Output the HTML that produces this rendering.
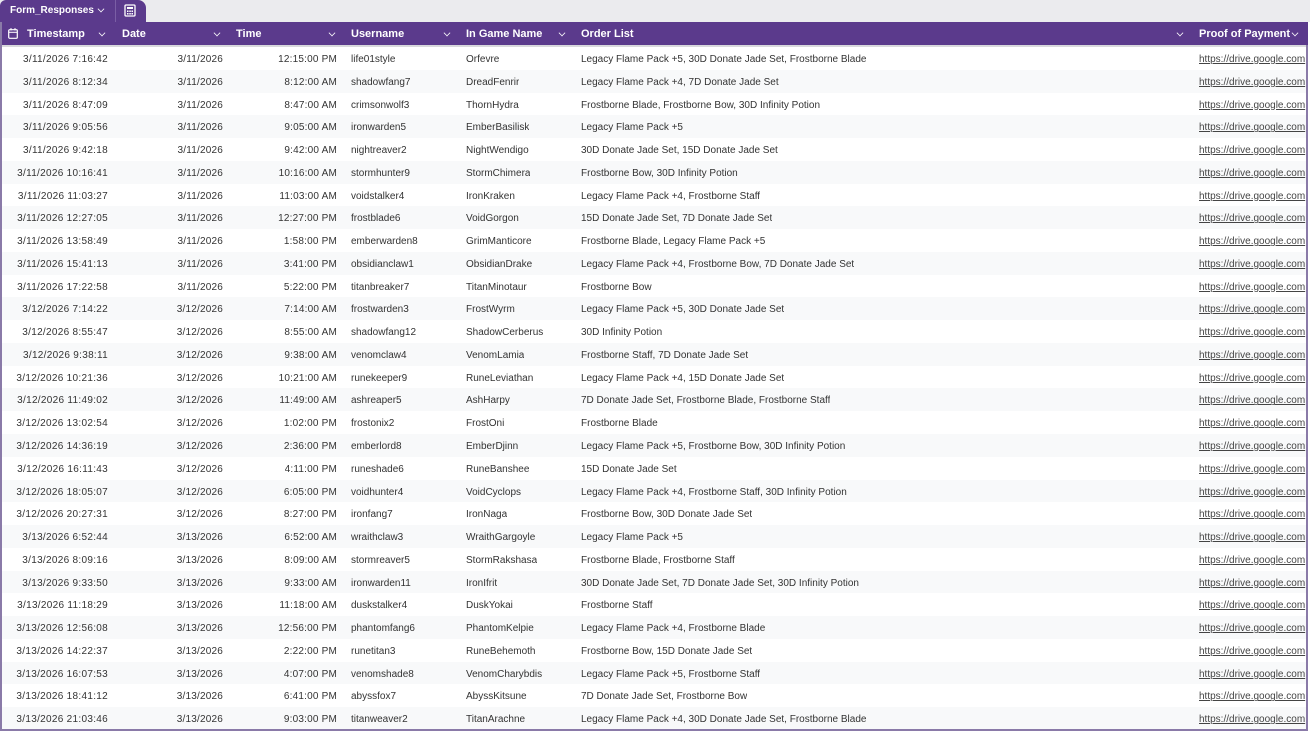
<!DOCTYPE html>
<html><head><meta charset="utf-8"><style>
*{margin:0;padding:0;box-sizing:border-box}
body{width:1310px;height:733px;overflow:hidden;background:#fff;font-family:"Liberation Sans",Arial,sans-serif;position:relative}
.top{position:absolute;left:0;top:0;width:1310px;height:22px;background:#ebebee}
.tab{position:absolute;left:0;top:0;height:22px;width:146px;background:#5b3a8c;border-radius:6px 8px 0 0;color:#fff;font-size:10px;font-weight:bold}
.tab .sep{position:absolute;left:115px;top:0;width:1px;height:22px;background:#7a5ea5}
.hdr{position:absolute;left:0;top:22px;width:1308px;height:23px;background:#5b3a8c;color:#fff;font-size:11px;font-weight:bold}
.hdr span{position:absolute;top:6px}
.chev{position:absolute;top:8px;width:6px;height:6px;border-right:1.5px solid #fff;border-bottom:1.5px solid #fff;transform:rotate(45deg) scale(.8)}
.shadow{position:absolute;left:0;top:45px;width:1308px;height:2px;background:#d8d8dc}
.rows{position:absolute;left:0;top:47px;width:1308px}
.r{height:22.77px;position:relative;font-size:10px;color:#333;line-height:22.77px}
.r:nth-child(even){background:#f8f9fa}
.r div{position:absolute;top:2px;white-space:nowrap;overflow:hidden}
.c1{right:1200px;text-align:right;letter-spacing:0.3px}
.c2{right:1085px;letter-spacing:0.2px}
.c3{right:971px;letter-spacing:0.2px}
.c4{left:351px}
.c5{left:466px}
.c6{left:581px}
.c7{left:1199px;width:108px;text-decoration:underline;color:#444}
.lb{position:absolute;left:0;top:22px;width:2px;height:709px;background:#8a7aa8}
.rb{position:absolute;left:1306px;top:45px;width:2px;height:686px;background:#8a7aa8}
.bb{position:absolute;left:0;top:729px;width:1308px;height:2px;background:#8a7aa8}
</style></head><body>
<div class="top"></div>
<div class="tab"><span style="position:absolute;left:10px;top:5px">Form_Responses</span><div class="chev" style="left:98px;top:6px"></div><div class="sep"></div>
<svg style="position:absolute;left:124px;top:4px" width="12" height="13" viewBox="0 0 12 13"><rect x="1" y="1" width="10" height="11" rx="1" fill="none" stroke="#fff" stroke-width="1.3"/><rect x="3" y="3" width="6" height="2" fill="#fff"/><g fill="#fff"><rect x="3" y="6.5" width="1.5" height="1.5"/><rect x="5.3" y="6.5" width="1.5" height="1.5"/><rect x="7.5" y="6.5" width="1.5" height="1.5"/><rect x="3" y="9" width="1.5" height="1.5"/><rect x="5.3" y="9" width="1.5" height="1.5"/><rect x="7.5" y="9" width="1.5" height="1.5"/></g></svg></div>
<div class="hdr">
<svg style="position:absolute;left:8px;top:6px" width="10" height="11" viewBox="0 0 10 11"><rect x="0.7" y="1.7" width="8.6" height="8.6" rx="1" fill="none" stroke="#fff" stroke-width="1.2"/><line x1="1" y1="4.3" x2="9" y2="4.3" stroke="#fff"/><line x1="3" y1="0" x2="3" y2="2.5" stroke="#fff"/><line x1="7" y1="0" x2="7" y2="2.5" stroke="#fff"/></svg>
<span style="left:27px">Timestamp</span><div class="chev" style="left:99px"></div>
<span style="left:122px">Date</span><div class="chev" style="left:214px"></div>
<span style="left:236px">Time</span><div class="chev" style="left:329px"></div>
<span style="left:351px">Username</span><div class="chev" style="left:444px"></div>
<span style="left:466px">In Game Name</span><div class="chev" style="left:559px"></div>
<span style="left:581px">Order List</span><div class="chev" style="left:1177px"></div>
<span style="left:1199px">Proof of Payment</span><div class="chev" style="left:1292px"></div>
</div>
<div class="shadow"></div>
<div class="rows" id="rows">
<div class="r"><div class="c1">3/11/2026 7:16:42</div><div class="c2">3/11/2026</div><div class="c3">12:15:00 PM</div><div class="c4">life01style</div><div class="c5">Orfevre</div><div class="c6">Legacy Flame Pack +5, 30D Donate Jade Set, Frostborne Blade</div><div class="c7">https://drive.google.com</div></div>
<div class="r"><div class="c1">3/11/2026 8:12:34</div><div class="c2">3/11/2026</div><div class="c3">8:12:00 AM</div><div class="c4">shadowfang7</div><div class="c5">DreadFenrir</div><div class="c6">Legacy Flame Pack +4, 7D Donate Jade Set</div><div class="c7">https://drive.google.com</div></div>
<div class="r"><div class="c1">3/11/2026 8:47:09</div><div class="c2">3/11/2026</div><div class="c3">8:47:00 AM</div><div class="c4">crimsonwolf3</div><div class="c5">ThornHydra</div><div class="c6">Frostborne Blade, Frostborne Bow, 30D Infinity Potion</div><div class="c7">https://drive.google.com</div></div>
<div class="r"><div class="c1">3/11/2026 9:05:56</div><div class="c2">3/11/2026</div><div class="c3">9:05:00 AM</div><div class="c4">ironwarden5</div><div class="c5">EmberBasilisk</div><div class="c6">Legacy Flame Pack +5</div><div class="c7">https://drive.google.com</div></div>
<div class="r"><div class="c1">3/11/2026 9:42:18</div><div class="c2">3/11/2026</div><div class="c3">9:42:00 AM</div><div class="c4">nightreaver2</div><div class="c5">NightWendigo</div><div class="c6">30D Donate Jade Set, 15D Donate Jade Set</div><div class="c7">https://drive.google.com</div></div>
<div class="r"><div class="c1">3/11/2026 10:16:41</div><div class="c2">3/11/2026</div><div class="c3">10:16:00 AM</div><div class="c4">stormhunter9</div><div class="c5">StormChimera</div><div class="c6">Frostborne Bow, 30D Infinity Potion</div><div class="c7">https://drive.google.com</div></div>
<div class="r"><div class="c1">3/11/2026 11:03:27</div><div class="c2">3/11/2026</div><div class="c3">11:03:00 AM</div><div class="c4">voidstalker4</div><div class="c5">IronKraken</div><div class="c6">Legacy Flame Pack +4, Frostborne Staff</div><div class="c7">https://drive.google.com</div></div>
<div class="r"><div class="c1">3/11/2026 12:27:05</div><div class="c2">3/11/2026</div><div class="c3">12:27:00 PM</div><div class="c4">frostblade6</div><div class="c5">VoidGorgon</div><div class="c6">15D Donate Jade Set, 7D Donate Jade Set</div><div class="c7">https://drive.google.com</div></div>
<div class="r"><div class="c1">3/11/2026 13:58:49</div><div class="c2">3/11/2026</div><div class="c3">1:58:00 PM</div><div class="c4">emberwarden8</div><div class="c5">GrimManticore</div><div class="c6">Frostborne Blade, Legacy Flame Pack +5</div><div class="c7">https://drive.google.com</div></div>
<div class="r"><div class="c1">3/11/2026 15:41:13</div><div class="c2">3/11/2026</div><div class="c3">3:41:00 PM</div><div class="c4">obsidianclaw1</div><div class="c5">ObsidianDrake</div><div class="c6">Legacy Flame Pack +4, Frostborne Bow, 7D Donate Jade Set</div><div class="c7">https://drive.google.com</div></div>
<div class="r"><div class="c1">3/11/2026 17:22:58</div><div class="c2">3/11/2026</div><div class="c3">5:22:00 PM</div><div class="c4">titanbreaker7</div><div class="c5">TitanMinotaur</div><div class="c6">Frostborne Bow</div><div class="c7">https://drive.google.com</div></div>
<div class="r"><div class="c1">3/12/2026 7:14:22</div><div class="c2">3/12/2026</div><div class="c3">7:14:00 AM</div><div class="c4">frostwarden3</div><div class="c5">FrostWyrm</div><div class="c6">Legacy Flame Pack +5, 30D Donate Jade Set</div><div class="c7">https://drive.google.com</div></div>
<div class="r"><div class="c1">3/12/2026 8:55:47</div><div class="c2">3/12/2026</div><div class="c3">8:55:00 AM</div><div class="c4">shadowfang12</div><div class="c5">ShadowCerberus</div><div class="c6">30D Infinity Potion</div><div class="c7">https://drive.google.com</div></div>
<div class="r"><div class="c1">3/12/2026 9:38:11</div><div class="c2">3/12/2026</div><div class="c3">9:38:00 AM</div><div class="c4">venomclaw4</div><div class="c5">VenomLamia</div><div class="c6">Frostborne Staff, 7D Donate Jade Set</div><div class="c7">https://drive.google.com</div></div>
<div class="r"><div class="c1">3/12/2026 10:21:36</div><div class="c2">3/12/2026</div><div class="c3">10:21:00 AM</div><div class="c4">runekeeper9</div><div class="c5">RuneLeviathan</div><div class="c6">Legacy Flame Pack +4, 15D Donate Jade Set</div><div class="c7">https://drive.google.com</div></div>
<div class="r"><div class="c1">3/12/2026 11:49:02</div><div class="c2">3/12/2026</div><div class="c3">11:49:00 AM</div><div class="c4">ashreaper5</div><div class="c5">AshHarpy</div><div class="c6">7D Donate Jade Set, Frostborne Blade, Frostborne Staff</div><div class="c7">https://drive.google.com</div></div>
<div class="r"><div class="c1">3/12/2026 13:02:54</div><div class="c2">3/12/2026</div><div class="c3">1:02:00 PM</div><div class="c4">frostonix2</div><div class="c5">FrostOni</div><div class="c6">Frostborne Blade</div><div class="c7">https://drive.google.com</div></div>
<div class="r"><div class="c1">3/12/2026 14:36:19</div><div class="c2">3/12/2026</div><div class="c3">2:36:00 PM</div><div class="c4">emberlord8</div><div class="c5">EmberDjinn</div><div class="c6">Legacy Flame Pack +5, Frostborne Bow, 30D Infinity Potion</div><div class="c7">https://drive.google.com</div></div>
<div class="r"><div class="c1">3/12/2026 16:11:43</div><div class="c2">3/12/2026</div><div class="c3">4:11:00 PM</div><div class="c4">runeshade6</div><div class="c5">RuneBanshee</div><div class="c6">15D Donate Jade Set</div><div class="c7">https://drive.google.com</div></div>
<div class="r"><div class="c1">3/12/2026 18:05:07</div><div class="c2">3/12/2026</div><div class="c3">6:05:00 PM</div><div class="c4">voidhunter4</div><div class="c5">VoidCyclops</div><div class="c6">Legacy Flame Pack +4, Frostborne Staff, 30D Infinity Potion</div><div class="c7">https://drive.google.com</div></div>
<div class="r"><div class="c1">3/12/2026 20:27:31</div><div class="c2">3/12/2026</div><div class="c3">8:27:00 PM</div><div class="c4">ironfang7</div><div class="c5">IronNaga</div><div class="c6">Frostborne Bow, 30D Donate Jade Set</div><div class="c7">https://drive.google.com</div></div>
<div class="r"><div class="c1">3/13/2026 6:52:44</div><div class="c2">3/13/2026</div><div class="c3">6:52:00 AM</div><div class="c4">wraithclaw3</div><div class="c5">WraithGargoyle</div><div class="c6">Legacy Flame Pack +5</div><div class="c7">https://drive.google.com</div></div>
<div class="r"><div class="c1">3/13/2026 8:09:16</div><div class="c2">3/13/2026</div><div class="c3">8:09:00 AM</div><div class="c4">stormreaver5</div><div class="c5">StormRakshasa</div><div class="c6">Frostborne Blade, Frostborne Staff</div><div class="c7">https://drive.google.com</div></div>
<div class="r"><div class="c1">3/13/2026 9:33:50</div><div class="c2">3/13/2026</div><div class="c3">9:33:00 AM</div><div class="c4">ironwarden11</div><div class="c5">IronIfrit</div><div class="c6">30D Donate Jade Set, 7D Donate Jade Set, 30D Infinity Potion</div><div class="c7">https://drive.google.com</div></div>
<div class="r"><div class="c1">3/13/2026 11:18:29</div><div class="c2">3/13/2026</div><div class="c3">11:18:00 AM</div><div class="c4">duskstalker4</div><div class="c5">DuskYokai</div><div class="c6">Frostborne Staff</div><div class="c7">https://drive.google.com</div></div>
<div class="r"><div class="c1">3/13/2026 12:56:08</div><div class="c2">3/13/2026</div><div class="c3">12:56:00 PM</div><div class="c4">phantomfang6</div><div class="c5">PhantomKelpie</div><div class="c6">Legacy Flame Pack +4, Frostborne Blade</div><div class="c7">https://drive.google.com</div></div>
<div class="r"><div class="c1">3/13/2026 14:22:37</div><div class="c2">3/13/2026</div><div class="c3">2:22:00 PM</div><div class="c4">runetitan3</div><div class="c5">RuneBehemoth</div><div class="c6">Frostborne Bow, 15D Donate Jade Set</div><div class="c7">https://drive.google.com</div></div>
<div class="r"><div class="c1">3/13/2026 16:07:53</div><div class="c2">3/13/2026</div><div class="c3">4:07:00 PM</div><div class="c4">venomshade8</div><div class="c5">VenomCharybdis</div><div class="c6">Legacy Flame Pack +5, Frostborne Staff</div><div class="c7">https://drive.google.com</div></div>
<div class="r"><div class="c1">3/13/2026 18:41:12</div><div class="c2">3/13/2026</div><div class="c3">6:41:00 PM</div><div class="c4">abyssfox7</div><div class="c5">AbyssKitsune</div><div class="c6">7D Donate Jade Set, Frostborne Bow</div><div class="c7">https://drive.google.com</div></div>
<div class="r"><div class="c1">3/13/2026 21:03:46</div><div class="c2">3/13/2026</div><div class="c3">9:03:00 PM</div><div class="c4">titanweaver2</div><div class="c5">TitanArachne</div><div class="c6">Legacy Flame Pack +4, 30D Donate Jade Set, Frostborne Blade</div><div class="c7">https://drive.google.com</div></div>
</div>
<div class="lb"></div><div class="rb"></div><div class="bb"></div>
</body></html>
